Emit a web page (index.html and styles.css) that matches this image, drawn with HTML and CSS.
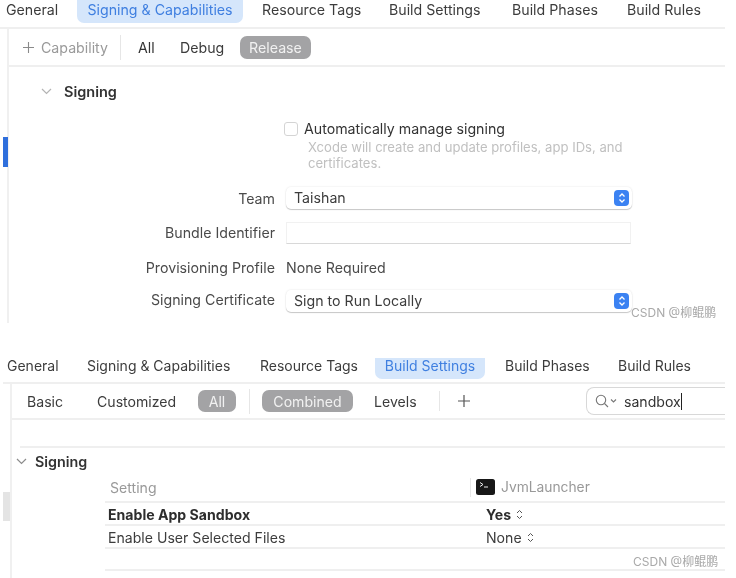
FILE: index.html
```html
<!DOCTYPE html>
<html lang="en">
<head>
<meta charset="utf-8">
<title>Signing and Build Settings</title>
<link rel="stylesheet" href="styles.css">
</head>
<body>
<main class="shot">
  <section class="panel panel-a">
    <nav class="tabs tabs-a">
      <span class="tab t1">General</span>
      <span class="tab t2 active">Signing &amp; Capabilities</span>
      <span class="tab t3">Resource Tags</span>
      <span class="tab t4">Build Settings</span>
      <span class="tab t5">Build Phases</span>
      <span class="tab t6">Build Rules</span>
    </nav>
    <div class="rail rail-a">
      <span class="stub stub-blue"></span>
      <div class="toolbar toolbar-a">
        <svg class="plus-a" width="11" height="11" viewBox="0 0 11 11"><path d="M5.500 0v11M0 5.500h11" stroke="#8a8a8a" stroke-width="1.100" fill="none"/></svg>
        <span class="cap">Capability</span>
        <span class="vsep vsep-a"></span>
        <span class="f-all">All</span>
        <span class="f-debug">Debug</span>
        <span class="pill pill-release">Release</span>
      </div>
      <div class="section-head head-a">
        <svg class="chev" width="11" height="7" viewBox="0 0 11 7"><path d="M1 1l4.500 4.500L10 1" stroke="#b4b4b4" stroke-width="1.200" fill="none"/></svg>
        <strong>Signing</strong>
      </div>
      <div class="auto-row">
        <span class="check"></span>
        <div>
          <div class="auto-label">Automatically manage signing</div>
          <p class="hint">Xcode will create and update profiles, app IDs, and certificates.</p>
        </div>
      </div>
      <div class="form">
        <div class="label">Team</div>
        <div class="select">Taishan
          <span class="stepper"><svg width="8" height="12" viewBox="0 0 8 12"><path d="M1.500 4.500L4 2l2.500 2.500M1.500 7.500L4 10l2.500-2.500" stroke="#fff" stroke-width="1.300" fill="none"/></svg></span>
        </div>
        <div class="label label-up">Bundle Identifier</div>
        <div class="input"></div>
        <div class="label label-up">Provisioning Profile</div>
        <div class="value label-up">None Required</div>
        <div class="label label-up2">Signing Certificate</div>
        <div class="select">Sign to Run Locally
          <span class="stepper"><svg width="8" height="12" viewBox="0 0 8 12"><path d="M1.500 4.500L4 2l2.500 2.500M1.500 7.500L4 10l2.500-2.500" stroke="#fff" stroke-width="1.300" fill="none"/></svg></span>
        </div>
      </div>
    </div>
    <span class="mark mark-a">CSDN @柳鲲鹏</span>
  </section>

  <section class="panel panel-b">
    <nav class="tabs tabs-b">
      <span class="tab u1">General</span>
      <span class="tab u2">Signing &amp; Capabilities</span>
      <span class="tab u3">Resource Tags</span>
      <span class="tab u4 active">Build Settings</span>
      <span class="tab u5">Build Phases</span>
      <span class="tab u6">Build Rules</span>
    </nav>
    <div class="rail rail-b">
      <span class="stub stub-grey"></span>
      <div class="toolbar toolbar-b">
        <span class="b-basic">Basic</span>
        <span class="b-custom">Customized</span>
        <span class="pill pill-all">All</span>
        <span class="vsep vsep-b1"></span>
        <span class="pill pill-combined">Combined</span>
        <span class="b-levels">Levels</span>
        <span class="vsep vsep-b2"></span>
        <svg class="plus-b" width="12" height="12" viewBox="0 0 12 12"><path d="M6 0v12M0 6h12" stroke="#555" stroke-width="1.200" fill="none"/></svg>
        <div class="search">
          <svg width="23" height="14" viewBox="0 0 23 14"><circle cx="6" cy="6" r="4.700" stroke="#777" stroke-width="1.100" fill="none"/><path d="M9.500 9.500l3.500 3.500M16 5.500l2.500 2.500L21 5.500" stroke="#777" stroke-width="1.100" fill="none"/></svg>
          <span class="query">sandbox</span><span class="caret"></span>
        </div>
      </div>
      <div class="spacer-row"></div>
      <div class="section-head head-b">
        <svg class="chev" width="11" height="7" viewBox="0 0 11 7"><path d="M1 1l4.500 4.500L10 1" stroke="#8c8c8c" stroke-width="1.200" fill="none"/></svg>
        <strong>Signing</strong>
      </div>
      <div class="table">
        <div class="row row-head">
          <span class="col-name muted">Setting</span>
          <span class="col-target">
            <span class="vsep vsep-t"></span>
            <svg class="term" width="19" height="16" viewBox="0 0 19 16"><rect width="19" height="16" rx="2.500" fill="#171717"/><path d="M4 3.500L7 5.500L4 7.500M8 8h4" stroke="#eee" stroke-width="1" fill="none"/></svg>
            <span class="muted jvm">JvmLauncher</span>
          </span>
        </div>
        <div class="row row-bold">
          <span class="col-name">Enable App Sandbox</span>
          <span class="col-val">Yes
            <svg width="7" height="11" viewBox="0 0 7 11"><path d="M1 4l2.500-2.500L6 4M1 7l2.500 2.500L6 7" stroke="#555" stroke-width="1" fill="none"/></svg>
          </span>
        </div>
        <div class="row">
          <span class="col-name">Enable User Selected Files</span>
          <span class="col-val">None
            <svg width="7" height="11" viewBox="0 0 7 11"><path d="M1 4l2.500-2.500L6 4M1 7l2.500 2.500L6 7" stroke="#555" stroke-width="1" fill="none"/></svg>
          </span>
        </div>
        <div class="row row-empty"></div>
      </div>
    </div>
    <span class="mark mark-b">CSDN @柳鲲鹏</span>
  </section>
</main>
</body>
</html>
```

FILE: styles.css
```css
html, body {
  margin: 0;
  padding: 0;
  background: #fff;
  overflow: hidden;
}
.shot {
  position: relative;
  width: 736px;
  height: 578px;
  overflow: hidden;
  font-family: Inter, "Noto Sans CJK SC", sans-serif;
  font-size: 14.200px;
  color: #3c3c3c;
  filter: blur(0.55px);
}
.panel {
  position: relative;
  width: 725px;
}
.panel-a { height: 323px; }
.panel-b { margin-top: 35px; height: 220px; font-size: 14.100px; }

/* tab bars */
.tabs {
  display: flex;
  align-items: flex-start;
  box-sizing: border-box;
  border-bottom: 2px solid #efefef;
  white-space: nowrap;
}
.tabs-a { height: 29px; padding-left: 6px; }
.tabs-b { height: 26px; margin-left: 3px; padding-left: 4px; font-size: 14px; }
.tab { display: block; line-height: 20px; }
.tabs-b .tab { line-height: 16px; }
.tab.active {
  background: #d5e6fb;
  color: #3f7fe0;
  border-radius: 0 0 7px 7px;
  box-sizing: border-box;
  text-align: center;
}
.t1 { width: 71px; }
.t2 { width: 166px; height: 23px; margin-right: 19px; }
.t3 { width: 127px; }
.t4 { width: 123px; }
.t5 { width: 115px; }
.t6 { width: 80px; }
.u1 { width: 80px; }
.u2 { width: 173px; }
.u3 { width: 115px; }
.u4 { width: 110px; height: 21px; margin-right: 20px; }
.u5 { width: 113px; }
.u6 { width: 80px; }

/* rails */
.rail {
  position: relative;
  box-sizing: border-box;
}
.rail-a { margin-left: 7px; border-left: 2px solid #f0f0f0; height: 294px; }
.rail-b { margin-left: 10px; border-left: 2px solid #f0f0f0; height: 195px; }
.stub { position: absolute; }
.stub-blue { left: -6px; top: 108px; width: 5px; height: 30px; background: #2f6fdc; }
.stub-grey { left: -9px; top: 108px; width: 7px; height: 29px; background: #e4e4e4; }

/* toolbars */
.toolbar {
  display: flex;
  align-items: center;
  box-sizing: border-box;
  border-bottom: 2px solid #efefef;
}
.toolbar-a { height: 38px; }
.toolbar-b { height: 36px; }
.plus-a { margin-left: 14px; }
.cap { margin-left: 7px; width: 79px; color: #9a9a9a; }
.vsep { display: block; width: 1px; background: #e6e6e6; height: 25px; }
.f-all { margin-left: 17px; width: 42px; color: #333; }
.f-debug { width: 60px; color: #3c3c3c; }
.pill {
  display: block;
  box-sizing: border-box;
  background: #a3a3a5;
  color: #f1f1f1;
  text-align: center;
  border-radius: 7px;
  line-height: 23px;
  height: 22px;
}
.pill-release { width: 71px; height: 23px; line-height: 24px; }
.b-basic { margin-left: 15px; width: 70px; }
.b-custom { width: 101px; }
.pill-all { width: 38px; }
.vsep-b1 { margin-left: 13px; }
.pill-combined { margin-left: 12px; width: 91px; }
.b-levels { margin-left: 21px; width: 65px; }
.vsep-b2 { height: 20px; }
.plus-b { margin-left: 18px; }
.search {
  display: flex;
  align-items: center;
  box-sizing: border-box;
  margin-left: 116px;
  width: 139px;
  height: 28px;
  padding-left: 8px;
  border: 1px solid #d8d8d8;
  border-right: 0;
  border-radius: 8px 0 0 8px;
}
.query { margin-left: 6px; color: #333; }
.caret { width: 1px; height: 17px; background: #222; }

/* sections */
.section-head { display: flex; align-items: center; color: #333; }
.section-head strong { font-weight: 600; }
.head-a { height: 48px; margin-left: 32px; gap: 12px; font-size: 14.500px; }
.head-b { height: 26px; margin: 0 0 2px 4px; gap: 8px; font-size: 14.300px; }
.spacer-row { height: 26px; margin-left: 8px; border-bottom: 2px solid #efefef; }

/* signing form */
.auto-row { display: flex; gap: 5px; margin-left: 275px; margin-top: 5px; }
.check {
  display: block;
  box-sizing: border-box;
  width: 14px;
  height: 14px;
  margin: 2px 1px 0 0;
  border: 1px solid #d4d4d4;
  border-radius: 3px;
  background: #fff;
}
.auto-label { line-height: 17px; color: #333; }
.hint {
  margin: 2px 0 0 4px;
  width: 325px;
  font-size: 13.100px;
  line-height: 16px;
  color: #c0c0c0;
}
.form {
  display: grid;
  grid-template-columns: 266px 346px;
  column-gap: 11px;
  grid-template-rows: 22px 22px 22px 22px;
  row-gap: 13px;
  align-items: center;
  margin-top: 16px;
}
.form > :nth-child(n+7) { margin-top: -4px; }
.label { text-align: right; color: #4a4a4a; }
.value { color: #4a4a4a; }
.label-up { position: relative; top: -1px; }
.label-up2 { position: relative; top: -2px; }
.select {
  position: relative;
  box-sizing: border-box;
  height: 22px;
  line-height: 21px;
  padding-left: 8px;
  color: #3c3c3c;
  background: #fff;
  border-radius: 5px;
  box-shadow: 0 0 2px rgba(0,0,0,.12), 0 1px 1px rgba(0,0,0,.2);
}
.input {
  box-sizing: border-box;
  height: 22px;
  width: 345px;
  border: 1px solid #f1f1f1;
  border-bottom: 1px solid #d8d8d8;
}
.stepper {
  position: absolute;
  right: 3px;
  top: 3px;
  display: flex;
  align-items: center;
  justify-content: center;
  width: 15px;
  height: 16px;
  border-radius: 4px;
  background: #3b82f2;
}

/* settings table */
.table { margin-left: 93px; }
.row {
  display: flex;
  align-items: center;
  box-sizing: border-box;
  height: 23px;
  border-bottom: 2px solid #efefef;
  padding-left: 3px;
  padding-top: 2px;
}
.row-head { height: 27px; padding-top: 0; padding-bottom: 3px; }
.row-bold { font-weight: 700; color: #2d2d2d; }
.row-empty { height: 22px; }
.col-name { display: block; width: 378px; }
.col-val { display: flex; align-items: center; gap: 5px; }
.muted { color: #999; }
.jvm { font-size: 13.800px; }
.row-head .col-name { padding-left: 2px; width: 360px; }
.col-target { display: flex; align-items: center; }
.vsep-t { height: 19px; margin-right: 5px; }
.term { margin-right: 6px; }

/* watermarks: overlap the artwork */
.mark {
  position: absolute;
  font-size: 12px;
  color: #a9a9a9;
  white-space: nowrap;
}
.mark-a { left: 631px; top: 303px; }
.mark-b { left: 633px; top: 194px; }
```
